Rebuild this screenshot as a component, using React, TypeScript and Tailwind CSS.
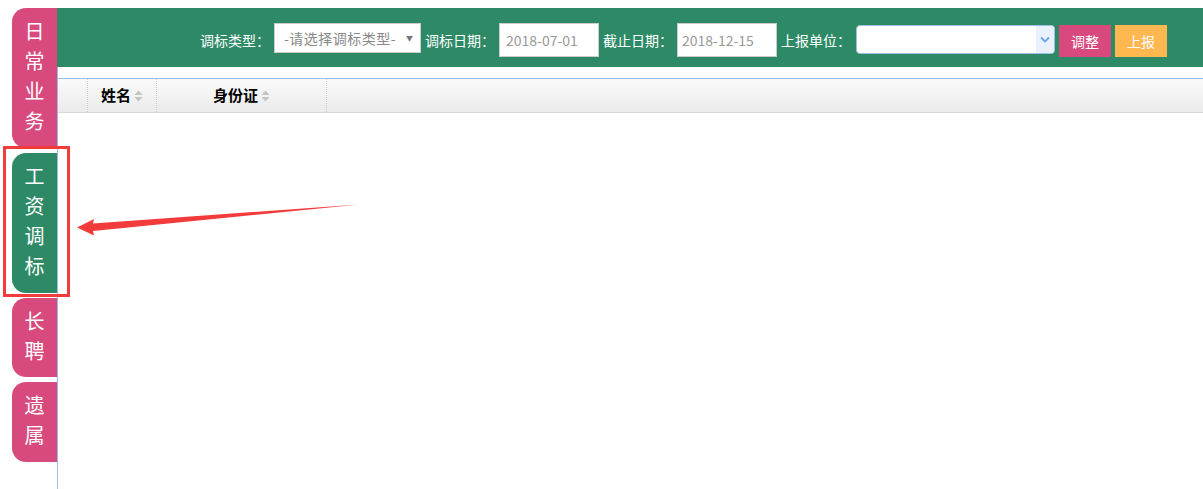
import React from 'react';

const tabs = [
  { label: '日常业务', color: 'bg-[#d84a7e]', h: 'h-[140px]' },
  { label: '工资调标', color: 'bg-[#2e8a66]', h: 'h-[140px]' },
  { label: '长聘', color: 'bg-[#d84a7e]', h: 'h-[79px]' },
  { label: '遗属', color: 'bg-[#d84a7e]', h: 'h-[80px]' },
];

function SortIcon() {
  return (
    <svg width="9" height="12" viewBox="0 0 9 12" className="ml-[3px]">
      <path d="M4.5 0.5 L8.5 5 L0.5 5 Z" fill="#c4c4c4" />
      <path d="M4.5 11.5 L8.5 7 L0.5 7 Z" fill="#c4c4c4" />
    </svg>
  );
}

export default function App() {
  return (
    <div className="relative flex h-[489px] w-[1203px] overflow-hidden bg-white font-['Noto_Sans_CJK_SC',sans-serif]">
      {/* Side tabs */}
      <aside className="flex w-[57px] shrink-0 flex-col gap-[5px] pl-3 pt-2">
        {tabs.map((t) => (
          <div
            key={t.label}
            className={`${t.color} ${t.h} flex flex-col items-center rounded-l-[14px] pt-[8px] text-[20px] leading-[30px] text-white`}
          >
            {t.label.split('').map((c, i) => (
              <span key={i}>{c}</span>
            ))}
          </div>
        ))}
      </aside>

      <main className="flex flex-1 flex-col pt-2">
        {/* Toolbar */}
        <div className="flex h-[59px] items-start gap-1 bg-[#2e8a66] pl-[143px] pt-[15px] text-[14px] text-white">
          <span className="h-[34px] w-[70px] leading-[34px]">调标类型：</span>
          <div className="flex h-[30px] w-[147px] items-center justify-between border border-[#ccc] bg-white pl-[9px] pr-[7px] text-[#888]">
            <span className="leading-[28px] tracking-[0.5px]">-请选择调标类型-</span>
            <span className="text-[7px] text-[#777]">▼</span>
          </div>
          <span className="h-[34px] w-[70px] leading-[34px]">调标日期：</span>
          <div className="h-[34px] w-[100px] border border-[#ccc] bg-white pl-[6px] leading-[32px] text-[#999]">2018-07-01</div>
          <span className="h-[34px] w-[70px] leading-[34px]">截止日期：</span>
          <div className="h-[34px] w-[100px] border border-[#ccc] bg-white pl-[4px] leading-[32px] text-[#999]">2018-12-15</div>
          <span className="h-[34px] w-[71px] leading-[34px]">上报单位：</span>
          <div className="mt-[2px] flex h-[29px] w-[199px] overflow-hidden rounded-[4px] border border-[#9cc0e8] bg-white">
            <div className="flex-1" />
            <div className="flex w-[18px] items-center justify-center bg-[#e8f1fd]">
              <svg width="10" height="7" viewBox="0 0 10 7">
                <path d="M1 1.5 L5 5.5 L9 1.5" stroke="#6aa6e6" strokeWidth="1.8" fill="none" />
              </svg>
            </div>
          </div>
          <button className="mt-[2px] h-[32px] w-[52px] bg-[#d84a7e] leading-[32px] text-white">调整</button>
          <button className="mt-[2px] h-[32px] w-[52px] bg-[#ffb74f] leading-[32px] text-white">上报</button>
        </div>

        {/* Grid body */}
        <div className="flex-1 border-l border-[#99bbe8] pt-[11px]">
          <div className="flex h-[35px] border-y border-t-[#99bbe8] border-b-[#d8d8d8] bg-gradient-to-b from-[#fafafa] to-[#ebebeb] text-[15px] font-bold text-black">
            <div className="w-[30px] border-r border-dotted border-[#ccc]" />
            <div className="flex w-[69px] items-center justify-center border-r border-dotted border-[#ccc]">
              <span>姓名</span>
              <SortIcon />
            </div>
            <div className="flex w-[170px] items-center justify-center border-r border-dotted border-[#ccc]">
              <span>身份证</span>
              <SortIcon />
            </div>
          </div>
        </div>
      </main>

      {/* Annotation: highlight box */}
      <div className="absolute left-[3px] top-[146px] h-[151px] w-[67px] border-[3px] border-[#f23c3c]" />

      {/* Annotation: arrow */}
      <svg className="absolute left-0 top-0" width="400" height="260" viewBox="0 0 400 260">
        <polygon
          points="77,227.5 94,219 93,223.5 359,204.5 93,231 94,235.5"
          fill="#f43b3b"
        />
      </svg>
    </div>
  );
}
